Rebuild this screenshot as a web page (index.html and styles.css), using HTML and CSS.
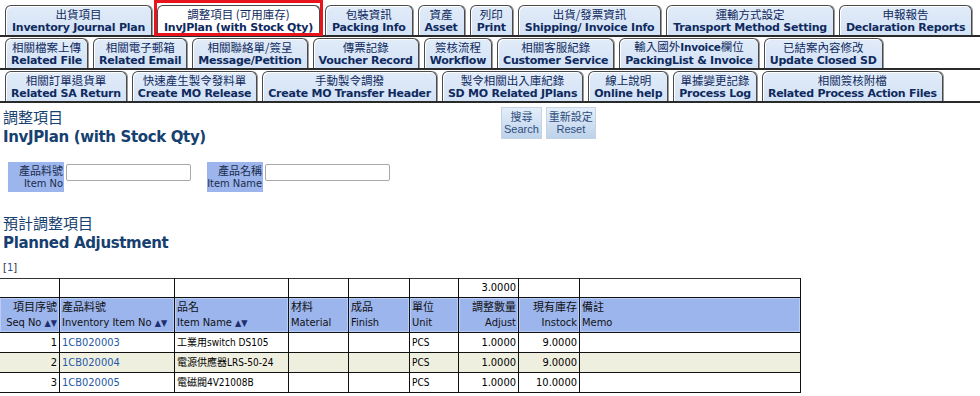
FILE: index.html
```html
<!DOCTYPE html>
<html lang="zh-Hant">
<head>
<meta charset="utf-8">
<title>調整項目 InvJPlan</title>
<link rel="stylesheet" href="styles.css">
</head>
<body>
<nav class="tabs">
  <div class="tabrow first">
    <a class="tab"><span class="zh">出貨項目</span><span class="en">Inventory Journal Plan</span></a>
    <a class="tab active"><span class="zh">調整項目 (可用庫存)</span><span class="en">InvJPlan (with Stock Qty)</span></a>
    <a class="tab"><span class="zh">包裝資訊</span><span class="en">Packing Info</span></a>
    <a class="tab"><span class="zh">資產</span><span class="en">Asset</span></a>
    <a class="tab"><span class="zh">列印</span><span class="en">Print</span></a>
    <a class="tab"><span class="zh">出貨/發票資訊</span><span class="en">Shipping/ Invoice Info</span></a>
    <a class="tab"><span class="zh">運輸方式設定</span><span class="en">Transport Method Setting</span></a>
    <a class="tab"><span class="zh">申報報告</span><span class="en">Declaration Reports</span></a>
  </div>
  <div class="tabrow">
    <a class="tab"><span class="zh">相關檔案上傳</span><span class="en">Related File</span></a>
    <a class="tab"><span class="zh">相關電子郵箱</span><span class="en">Related Email</span></a>
    <a class="tab"><span class="zh">相關聯絡單/簽呈</span><span class="en">Message/Petition</span></a>
    <a class="tab"><span class="zh">傳票記錄</span><span class="en">Voucher Record</span></a>
    <a class="tab"><span class="zh">簽核流程</span><span class="en">Workflow</span></a>
    <a class="tab"><span class="zh">相關客服紀錄</span><span class="en">Customer Service</span></a>
    <a class="tab"><span class="zh">輸入國外<b>Invoice</b>欄位</span><span class="en">PackingList &amp; Invoice</span></a>
    <a class="tab"><span class="zh">已結案內容修改</span><span class="en">Update Closed SD</span></a>
  </div>
  <div class="tabrow">
    <a class="tab"><span class="zh">相關訂單退貨單</span><span class="en">Related SA Return</span></a>
    <a class="tab"><span class="zh">快速產生製令發料單</span><span class="en">Create MO Release</span></a>
    <a class="tab"><span class="zh">手動製令調撥</span><span class="en">Create MO Transfer Header</span></a>
    <a class="tab"><span class="zh">製令相關出入庫紀錄</span><span class="en">SD MO Related JPlans</span></a>
    <a class="tab"><span class="zh">線上說明</span><span class="en">Online help</span></a>
    <a class="tab"><span class="zh">單據變更記錄</span><span class="en">Process Log</span></a>
    <a class="tab"><span class="zh">相關簽核附檔</span><span class="en">Related Process Action Files</span></a>
  </div>
</nav>

<section class="titlebar">
  <h1 class="title"><span class="zh-t">調整項目</span><span class="en-t">InvJPlan (with Stock Qty)</span></h1>
  <div class="actions">
    <button class="btn"><span>搜尋</span><span>Search</span></button>
    <button class="btn"><span>重新設定</span><span>Reset</span></button>
  </div>
</section>

<form class="filters">
  <div class="field">
    <label class="flabel"><span>產品料號</span><span>Item No</span></label>
    <input class="finput" type="text">
  </div>
  <div class="field">
    <label class="flabel"><span>產品名稱</span><span>Item Name</span></label>
    <input class="finput" type="text">
  </div>
</form>

<h2 class="title sub"><span class="zh-t">預計調整項目</span><span class="en-t">Planned Adjustment</span></h2>

<div class="pager">[<a>1</a>]</div>

<table class="grid">
  <colgroup>
    <col class="c-seq"><col class="c-item"><col class="c-name"><col class="c-mat"><col class="c-fin"><col class="c-unit"><col class="c-adj"><col class="c-stock"><col class="c-memo">
  </colgroup>
  <tr class="sum">
    <td></td><td></td><td></td><td></td><td></td><td></td><td class="num">3.0000</td><td></td><td></td>
  </tr>
  <tr class="head">
    <th class="r">項目序號<br>Seq No <span class="sort">▲▼</span></th>
    <th>產品料號<br>Inventory Item No <span class="sort">▲▼</span></th>
    <th>品名<br>Item Name <span class="sort">▲▼</span></th>
    <th>材料<br>Material</th>
    <th>成品<br>Finish</th>
    <th>單位<br>Unit</th>
    <th class="r">調整數量<br>Adjust</th>
    <th class="r">現有庫存<br>Instock</th>
    <th>備註<br>Memo</th>
  </tr>
  <tr>
    <td class="num">1</td><td><a class="lnk">1CB020003</a></td><td class="sm">工業用switch DS105</td><td></td><td></td><td class="sm">PCS</td><td class="num">1.0000</td><td class="num">9.0000</td><td></td>
  </tr>
  <tr class="alt">
    <td class="num">2</td><td><a class="lnk">1CB020004</a></td><td class="sm">電源供應器LRS-50-24</td><td></td><td></td><td class="sm">PCS</td><td class="num">1.0000</td><td class="num">9.0000</td><td></td>
  </tr>
  <tr>
    <td class="num">3</td><td><a class="lnk">1CB020005</a></td><td class="sm">電磁閥4V21008B</td><td></td><td></td><td class="sm">PCS</td><td class="num">1.0000</td><td class="num">10.0000</td><td></td>
  </tr>
</table>
</body>
</html>
```
FILE: styles.css
```css
* { box-sizing: border-box; }
body {
  margin: 0;
  font-family: "DejaVu Sans", "Noto Sans CJK TC", sans-serif;
  color: #000;
  background: #fff;
}

/* ---------- tabs ---------- */
.tabs { display: flex; flex-direction: column; }
.tabrow {
  display: flex;
  gap: 5px;
  padding: 1px 0 0 5px;
  border-bottom: 2px solid #2a2a2a;
}
.tabrow.first { padding-top: 5px; }
.tab {
  position: relative;
  height: 30px;
  padding: 0 5px;
  display: flex;
  flex-direction: column;
  align-items: center;
  justify-content: center;
  border: 1px solid #4a4a4a;
  border-bottom: 0;
  border-radius: 6px 6px 0 0;
  background: linear-gradient(#e2ecf9, #d3e2f5);
  box-shadow: inset 1px 1px 0 #ffffff, 1px 0 0 #9a9a9a;
  color: #0f2a5e;
  white-space: nowrap;
}
.tabrow.first .tab { padding: 0 6px; }
.tab .zh {
  font-family: "Noto Sans CJK TC", sans-serif;
  font-size: 11.5px;
  line-height: 14px;
}
.tab .zh b { font-family: "DejaVu Sans", sans-serif; font-size: 10.5px; letter-spacing: -0.3px; }
.tab .en {
  font-family: "DejaVu Sans", sans-serif;
  font-weight: bold;
  font-size: 11px;
  letter-spacing: -0.25px;
  line-height: 14px;
}
.tab.active { background: #fff; }
.tab.active::after {
  content: "";
  position: absolute;
  left: -4px;
  right: -4px;
  top: -6px;
  bottom: -1px;
  border: 3px solid #e8141b;
}

/* ---------- title ---------- */
.titlebar {
  display: flex;
  align-items: flex-start;
  padding: 4px 0 0 3px;
}
.title {
  margin: 0;
  display: flex;
  flex-direction: column;
  color: #16406f;
  width: 498px;
}
.zh-t {
  font-family: "Noto Sans CJK TC", sans-serif;
  font-weight: normal;
  font-size: 15px;
  line-height: 19px;
}
.en-t {
  font-family: "DejaVu Sans", sans-serif;
  font-weight: bold;
  font-size: 15px;
  letter-spacing: -0.35px;
  line-height: 22px;
}
.actions { display: flex; gap: 4px; }
.btn {
  margin: 0;
  padding: 0 2px;
  height: 32px;
  display: flex;
  flex-direction: column;
  align-items: center;
  justify-content: center;
  border: 1px solid #c5d3e3;
  background: linear-gradient(#e4eefa, #bdd2ea);
  color: #2c4d7c;
  font-family: "Liberation Sans", "Noto Sans CJK TC", sans-serif;
  font-size: 11px;
  line-height: 13px;
}
.btn span:first-child { font-family: "Noto Sans CJK TC", sans-serif; }

/* ---------- filters ---------- */
.filters {
  display: flex;
  gap: 16px;
  margin: 14px 0 0 8px;
}
.field { display: flex; align-items: flex-start; gap: 2px; }
.flabel {
  width: 56px;
  height: 30px;
  padding: 0 1px;
  display: flex;
  flex-direction: column;
  align-items: flex-end;
  justify-content: center;
  background: #9cb5ed;
  color: #1b2b4b;
  font-family: "DejaVu Sans Condensed", "DejaVu Sans", "Noto Sans CJK TC", sans-serif;
  font-size: 11px;
  line-height: 14px;
  white-space: nowrap;
}
.flabel span:first-child { font-family: "Noto Sans CJK TC", sans-serif; }
.finput {
  margin-top: 2px;
  width: 125px;
  height: 17px;
  border: 1px solid #a8a8a8;
  border-radius: 2px;
  background: #fff;
}

/* ---------- planned ---------- */
.sub { margin-top: 21px; padding-left: 3px; }
.pager {
  margin: 7px 0 0 3px;
  font-family: "DejaVu Sans", sans-serif;
  font-size: 10px;
  line-height: 14px;
  color: #333;
}
.pager a { color: #2255aa; }

/* ---------- grid ---------- */
.grid {
  margin: 3px 0 0 -1px;
  border-collapse: collapse;
  table-layout: fixed;
  width: 801px;
  font-family: "DejaVu Sans Condensed", "DejaVu Sans", "Noto Sans CJK TC", sans-serif;
  font-size: 11px;
  border: 1px solid #333;
}
.c-seq { width: 60px; }
.c-item { width: 115px; }
.c-name { width: 114px; }
.c-mat { width: 60px; }
.c-fin { width: 61px; }
.c-unit { width: 49px; }
.c-adj { width: 60px; }
.c-stock { width: 61px; }
.c-memo { width: 221px; }
.grid td, .grid th {
  border: 1px solid #111;
  padding: 0 2px;
  white-space: nowrap;
  overflow: hidden;
}
.grid td { height: 20px; line-height: 18px; }
.grid .sum td { height: 18px; border-top-color: #333; }
.grid th {
  height: 35px;
  font-weight: normal;
  text-align: left;
  background: #9cb5ed;
  color: #111;
  line-height: 15px;
  box-shadow: inset 0 0 0 1px #b9cdf5;
}
.grid th.r, .grid td.num { text-align: right; }
.sort { font-size: 9px; color: #1e2f70; }
.grid tr.alt td { background: #efefe0; }
.grid td.sm { font-size: 10px; }
.lnk { color: #2557a8; }
```
